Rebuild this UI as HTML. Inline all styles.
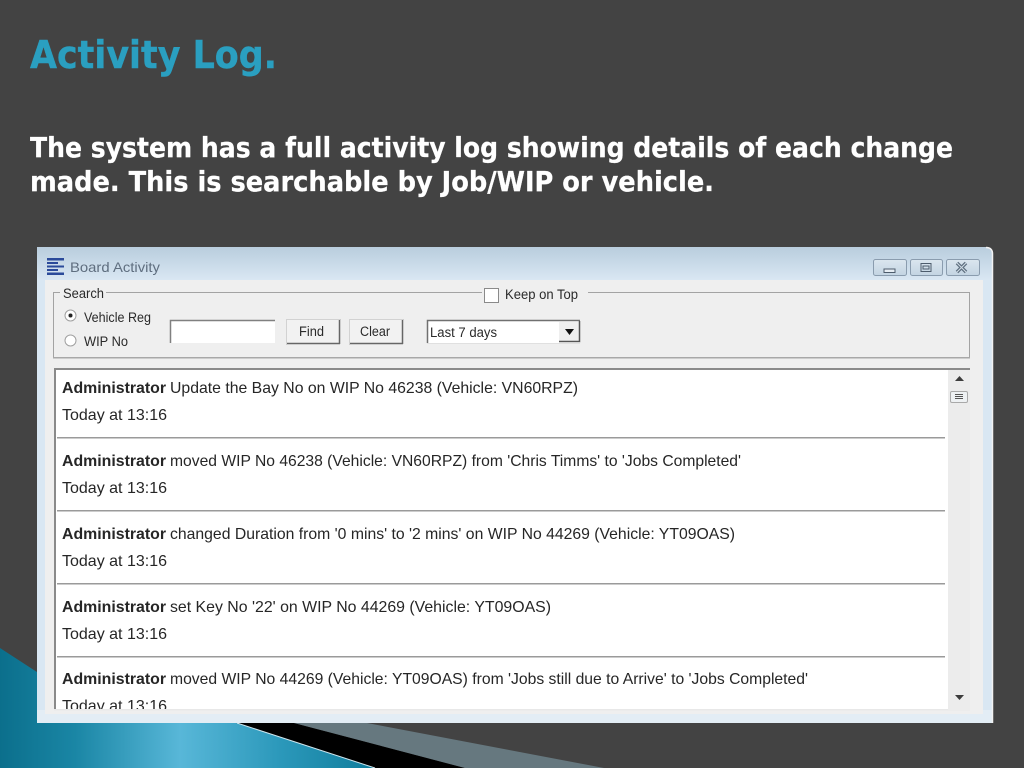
<!DOCTYPE html>
<html>
<head>
<meta charset="utf-8">
<style>
html,body{margin:0;padding:0;background:#434343;width:1024px;height:768px;overflow:hidden}
svg{display:block}
#page{filter:blur(.35px)}
text{font-family:"Liberation Sans",sans-serif}
.h{font-family:"DejaVu Sans",sans-serif;font-weight:bold}
.t{font-size:16px;fill:#262626}
.u{font-size:13.5px;fill:#2a2a2a}
</style>
</head>
<body>
<svg id="page" width="1024" height="768" viewBox="0 0 1024 768" xmlns="http://www.w3.org/2000/svg">
<defs>
<linearGradient id="teal" x1="0" y1="0" x2="1" y2="0">
<stop offset="0" stop-color="#0b6f8c"/>
<stop offset="0.2" stop-color="#1a86a5"/>
<stop offset="0.48" stop-color="#58b7d8"/>
<stop offset="0.75" stop-color="#2b98ba"/>
<stop offset="1" stop-color="#0f7c9b"/>
</linearGradient>
<linearGradient id="title" x1="0" y1="0" x2="0" y2="1">
<stop offset="0" stop-color="#b9cddd"/>
<stop offset="1" stop-color="#d9e7f3"/>
</linearGradient>
<linearGradient id="btn" x1="0" y1="0" x2="0" y2="1">
<stop offset="0" stop-color="#dbe6ef"/>
<stop offset="1" stop-color="#c3d4e2"/>
</linearGradient>
</defs>
<rect width="1024" height="768" fill="#434343"/>

<!-- corner decoration -->
<polygon points="0,648 40,674 240,724 375,768 0,768" fill="url(#teal)"/>
<polygon points="237,723 294,723 465,768 375,768" fill="#000"/>
<polygon points="294,723 367,723 604,768 465,768" fill="#66787f"/>
<polyline points="237,723 375,768" fill="none" stroke="#cfe6ee" stroke-width="1"/>

<!-- headings -->
<text x="30" y="68" font-size="38" class="h" fill="#2a9fc0" stroke="#2a9fc0" stroke-width="0.4" textLength="247" lengthAdjust="spacingAndGlyphs">Activity Log.</text>
<text x="30" y="157" font-size="27.500" class="h" fill="#fff" stroke="#fff" stroke-width="0.25" textLength="923" lengthAdjust="spacingAndGlyphs">The system has a full activity log showing details of each change</text>
<text x="30" y="191" font-size="27.500" class="h" fill="#fff" stroke="#fff" stroke-width="0.25" textLength="684" lengthAdjust="spacingAndGlyphs">made. This is searchable by Job/WIP or vehicle.</text>

<!-- window -->
<path d="M37 247H986Q992 247 992 253V723H37Z" fill="#d9e7f3"/>
<path d="M37 247H986Q992 247 992 253V280H37Z" fill="url(#title)"/>
<rect x="37" y="710" width="955" height="13" fill="#e3edf5"/>
<path d="M986 247.500Q992.500 247.500 992.500 254V723" fill="none" stroke="#f2f2f2" stroke-width="1.500"/>
<rect x="45" y="280" width="938" height="434" fill="#efefef"/>

<!-- title bar -->
<g fill="#2b4a9a">
<rect x="47" y="258" width="17" height="2.500"/>
<rect x="47" y="262" width="11" height="2"/>
<rect x="47" y="265.500" width="17" height="2"/>
<rect x="47" y="269" width="11" height="2"/>
<rect x="47" y="272.500" width="17" height="2.500"/>
</g>
<text x="70" y="272" font-size="14" fill="#5f6e7f" textLength="90" lengthAdjust="spacingAndGlyphs">Board Activity</text>

<!-- window buttons -->
<g stroke="#8a9cae" fill="url(#btn)">
<rect x="873.500" y="259.500" width="33" height="16" rx="2"/>
<rect x="910.500" y="259.500" width="32" height="16" rx="2"/>
<rect x="946.500" y="259.500" width="33" height="16" rx="2"/>
</g>
<rect x="884" y="269" width="11" height="3.500" fill="#e6edf3" stroke="#4d5c6c" stroke-width="1"/>
<rect x="921" y="263.500" width="10" height="8" fill="none" stroke="#4d5c6c" stroke-width="1"/>
<rect x="923" y="266" width="6" height="3" fill="none" stroke="#4d5c6c" stroke-width="1"/>
<path d="M957 263l9 9M966 263l-9 9" stroke="#5e6f80" stroke-width="3.500" fill="none"/>
<path d="M957 263l9 9M966 263l-9 9" stroke="#d0dce6" stroke-width="1" fill="none"/>

<!-- search group -->
<rect x="53.500" y="292.500" width="916" height="65" fill="none" stroke="#a3a3a3" stroke-width="1"/>
<rect x="60" y="287" width="46" height="12" fill="#efefef"/>
<rect x="482" y="287" width="106" height="14" fill="#efefef"/>
<rect x="53" y="357" width="917" height="1.500" fill="#a8a8a8"/>
<text x="63" y="298" class="u" textLength="41" lengthAdjust="spacingAndGlyphs">Search</text>
<rect x="484.500" y="288.500" width="14" height="14" fill="#fff" stroke="#8a8a8a"/>
<text x="505" y="299" class="u" textLength="73" lengthAdjust="spacingAndGlyphs">Keep on Top</text>

<!-- radios -->
<circle cx="70.500" cy="315.500" r="5.500" fill="#fff" stroke="#a0a0a0"/>
<circle cx="70.500" cy="315.500" r="2" fill="#222"/>
<circle cx="70.500" cy="340.500" r="5.500" fill="#fff" stroke="#a0a0a0"/>
<text x="84" y="322" class="u" textLength="67" lengthAdjust="spacingAndGlyphs">Vehicle Reg</text>
<text x="84" y="346" class="u" textLength="44" lengthAdjust="spacingAndGlyphs">WIP No</text>

<!-- input -->
<rect x="170" y="320" width="105" height="23" fill="#fff"/>
<path d="M170.500 343V320.500H275" fill="none" stroke="#808080" stroke-width="1.500"/>

<!-- buttons -->
<rect x="286" y="319" width="54" height="25" fill="#f2f2f2"/>
<path d="M286 343.500H340M339.500 319V344" stroke="#666" stroke-width="1.500" fill="none"/>
<path d="M286.500 344V319.500H340" stroke="#d2d2d2" fill="none"/>
<text x="299" y="336" class="u" textLength="25" lengthAdjust="spacingAndGlyphs">Find</text>
<rect x="349" y="319" width="54" height="25" fill="#f2f2f2"/>
<path d="M349 343.500H403M402.500 319V344" stroke="#666" stroke-width="1.500" fill="none"/>
<path d="M349.500 344V319.500H403" stroke="#d2d2d2" fill="none"/>
<text x="360" y="336" class="u" textLength="30" lengthAdjust="spacingAndGlyphs">Clear</text>

<!-- combo -->
<rect x="427" y="320" width="153" height="23" fill="#fff"/>
<path d="M427.500 343V320.500H580" fill="none" stroke="#707070" stroke-width="1.500"/>
<path d="M427 343.500H580" stroke="#e0e0e0" stroke-width="1"/>
<rect x="559" y="322" width="20" height="20" fill="#efefef"/>
<path d="M559 341.500H579.500V321" stroke="#555" stroke-width="1.500" fill="none"/>
<polygon points="565,329 574,329 569.500,335" fill="#111"/>
<text x="430" y="337" class="u" textLength="67" lengthAdjust="spacingAndGlyphs">Last 7 days</text>

<!-- list -->
<rect x="54" y="368" width="916" height="342" fill="#fff"/>
<rect x="54" y="368" width="916" height="2" fill="#8a8a8a"/>
<rect x="54" y="368" width="2" height="342" fill="#8a8a8a"/>
<rect x="54" y="709" width="916" height="1.500" fill="#e8e8e8"/>
<rect x="948" y="370" width="22" height="340" fill="#ececec"/>
<polygon points="955,381 964,381 959.500,376" fill="#3c3c3c"/>
<polygon points="955,695 964,695 959.500,700" fill="#3c3c3c"/>
<rect x="950.500" y="391.500" width="17" height="11" rx="1.500" fill="#eef1f3" stroke="#a9a9a9"/>
<path d="M955 394.500h8M955 396.500h8M955 398.500h8" stroke="#555" stroke-width="1"/>

<g fill="#9a9a9a">
<rect x="57" y="437" width="888" height="1.500"/>
<rect x="57" y="510" width="888" height="1.500"/>
<rect x="57" y="583" width="888" height="1.500"/>
<rect x="57" y="656" width="888" height="1.500"/>
</g>

<g class="t">
<text x="62" y="393" class="t" font-weight="bold" textLength="104" lengthAdjust="spacingAndGlyphs">Administrator</text>
<text x="170" y="393" class="t" textLength="408" lengthAdjust="spacingAndGlyphs">Update the Bay No on WIP No 46238 (Vehicle: VN60RPZ)</text>
<text x="62" y="420" class="t" textLength="105" lengthAdjust="spacingAndGlyphs">Today at 13:16</text>

<text x="62" y="466" class="t" font-weight="bold" textLength="104" lengthAdjust="spacingAndGlyphs">Administrator</text>
<text x="170" y="466" class="t" textLength="571" lengthAdjust="spacingAndGlyphs">moved WIP No 46238 (Vehicle: VN60RPZ) from 'Chris Timms' to 'Jobs Completed'</text>
<text x="62" y="493" class="t" textLength="105" lengthAdjust="spacingAndGlyphs">Today at 13:16</text>

<text x="62" y="539" class="t" font-weight="bold" textLength="104" lengthAdjust="spacingAndGlyphs">Administrator</text>
<text x="170" y="539" class="t" textLength="565" lengthAdjust="spacingAndGlyphs">changed Duration from '0 mins' to '2 mins' on WIP No 44269 (Vehicle: YT09OAS)</text>
<text x="62" y="566" class="t" textLength="105" lengthAdjust="spacingAndGlyphs">Today at 13:16</text>

<text x="62" y="612" class="t" font-weight="bold" textLength="104" lengthAdjust="spacingAndGlyphs">Administrator</text>
<text x="170" y="612" class="t" textLength="381" lengthAdjust="spacingAndGlyphs">set Key No '22' on WIP No 44269 (Vehicle: YT09OAS)</text>
<text x="62" y="639" class="t" textLength="105" lengthAdjust="spacingAndGlyphs">Today at 13:16</text>

<text x="62" y="684" class="t" font-weight="bold" textLength="104" lengthAdjust="spacingAndGlyphs">Administrator</text>
<text x="170" y="684" class="t" textLength="638" lengthAdjust="spacingAndGlyphs">moved WIP No 44269 (Vehicle: YT09OAS) from 'Jobs still due to Arrive' to 'Jobs Completed'</text>
<svg x="56" y="690" width="880" height="19"><text x="6" y="21" class="t" textLength="105" lengthAdjust="spacingAndGlyphs">Today at 13:16</text></svg>
</g>
</svg>
</body>
</html>
